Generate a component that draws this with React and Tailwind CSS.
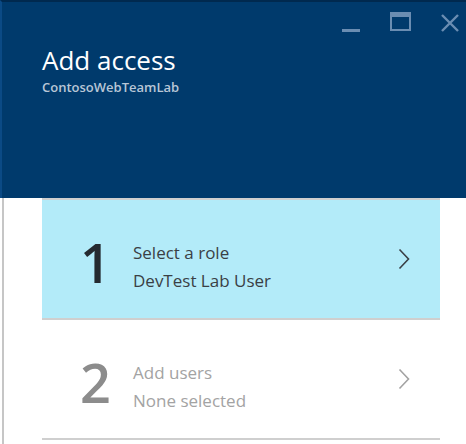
import React from "react";

const font = { fontFamily: '"Open Sans", "Noto Sans", sans-serif' };

const Chevron = ({ color }) => (
  <svg width="12" height="22" viewBox="0 0 12 22" fill="none">
    <path d="M1.5 1.5 L10.5 11 L1.5 20.5" stroke={color} strokeWidth="1.6" />
  </svg>
);

const Step = ({ num, title, value, active }) => (
  <div
    className={`flex h-[120px] items-center border-b-2 border-[#cfcfcf] pl-[38px] pr-[30px] ${
      active ? "bg-[#b3ebf9]" : "bg-white"
    }`}
  >
    <div
      className={`w-[53px] pt-[6px] text-[54px] font-semibold leading-none ${
        active ? "text-[#252a30]" : "text-[#8c8c8c]"
      }`}
    >
      {num}
    </div>
    <div
      className={`flex-1 pt-[16px] text-[17px] leading-[28px] ${
        active ? "text-[#3a3f45]" : "text-[#a3a3a3]"
      }`}
    >
      <div>{title}</div>
      <div>{value}</div>
    </div>
    <Chevron color={active ? "#3a3f45" : "#a3a3a3"} />
  </div>
);

export default function App() {
  return (
    <div className="h-[444px] w-[466px] overflow-hidden bg-white" style={font}>
      <div className="relative h-[198px] border-t-2 border-l-2 border-t-[#00294f] border-l-[#0b4a85] bg-[#003a6c]">
        <div className="absolute right-[7px] top-[10px] flex items-start gap-[30px]">
          <div className="mt-[17px] h-[3px] w-[18px] bg-[#6a8db2]" />
          <div className="h-[19px] w-[21px] border-2 border-t-[5px] border-[#6a8db2]" />
          <svg width="18" height="18" viewBox="0 0 18 18" className="mt-[2px]">
            <path d="M1 1 L17 17 M17 1 L1 17" stroke="#6a8db2" strokeWidth="2.4" />
          </svg>
        </div>
        <div className="pl-[40px] pt-[42px]">
          <div className="text-[26px] leading-[32px] text-white">Add access</div>
          <div className="mt-[2px] text-[13px] font-semibold text-[#b8c6d6]">
            ContosoWebTeamLab
          </div>
        </div>
      </div>
      <div className="ml-[2px] h-[246px] border-l-2 border-[#c6c6c6]">
        <div className="ml-[38px] w-[398px] border-t-2 border-[#cfcfcf]">
          <Step num="1" title="Select a role" value="DevTest Lab User" active />
          <Step num="2" title="Add users" value="None selected" />
        </div>
      </div>
    </div>
  );
}
